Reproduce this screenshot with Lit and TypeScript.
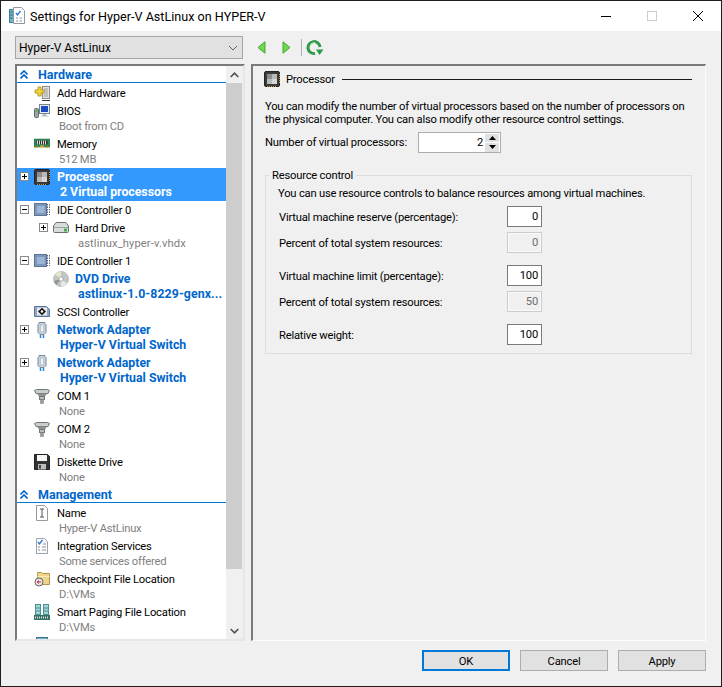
import { LitElement, html, css, svg } from 'lit';
import { customElement } from 'lit/decorators.js';

const icons: Record<string, any> = {
  add: svg`<rect x="8.5" y="1.5" width="7" height="12" fill="#e4e4e4" stroke="#8a8a8a"/><path d="M11 3v9M13 3v9" stroke="#9a9a9a"/><path d="M8 15.5h8" stroke="#333"/><path d="M1 5h3V2h3v3h3v3H7v3H4V8H1z" fill="#f2d23c" stroke="#b08e10" stroke-width=".8"/>`,
  bios: svg`<rect x="5.5" y="1.5" width="10" height="9" fill="#e8eef5" stroke="#77828e"/><rect x="7" y="3" width="7" height="6" fill="#1a4bc0"/><path d="M9 11h3v1.500h2v1H7v-1h2z" fill="#b4b8bc"/><rect x="0.500" y="5.500" width="4" height="9" rx="1" fill="#98a6a4" stroke="#5f6c6a"/><rect x="1.500" y="7" width="2" height="1.500" fill="#37b24a"/>`,
  memory: svg`<rect x="0" y="3" width="16" height="8" fill="#2f8a55" stroke="#1f6a3f" stroke-width=".5"/><rect x="2.500" y="4.500" width="11" height="4" fill="#303030"/><path d="M3.500 4.500v4M5.500 4.500v4M7.500 4.500v4M9.500 4.500v4M11.500 4.500v4" stroke="#d8d8d8"/><rect x="6" y="9.500" width="4" height="2" fill="#d4a62a"/><rect x="1" y="10.500" width="3" height="1.500" fill="#d4a62a"/><rect x="12" y="10.500" width="3" height="1.500" fill="#d4a62a"/>`,
  cpu: svg`<rect x=".5" y=".5" width="15" height="15" rx="1.500" fill="#3a3a3a" stroke="#222"/><rect x="3" y="3" width="10" height="10" fill="#b9b9b9"/><rect x="3" y="3" width="5" height="5" fill="#8d8d8d"/><rect x="8" y="8" width="5" height="5" fill="#d6d6d6"/><path d="M15.500 3v10M3 15.500h10" stroke="#c8a040" stroke-dasharray="1 1"/>`,
  ide: svg`<rect x=".5" y="1.500" width="12" height="12" fill="#7d98bb" stroke="#5a7396"/><rect x="2.500" y="3.500" width="8.500" height="8" fill="#9db6d6" stroke="#6e88aa" stroke-width=".5"/><path d="M13.500 2v11M15.500 2v11" stroke="#5e6a78" stroke-dasharray="1.500 1"/>`,
  hdd: svg`<path d="M3 2.500h10L15.500 6v5.500a1 1 0 0 1-1 1h-13a1 1 0 0 1-1-1V6z" fill="#d9dcdc" stroke="#6d7272"/><path d="M1 7.500h14" stroke="#9da3a3"/><rect x="11" y="8.500" width="3" height="3" fill="#48b04a"/>`,
  dvd: svg`<circle cx="8" cy="8" r="7.500" fill="#c2c6c4" stroke="#a0a4a2" stroke-width=".6"/><path d="M8 8L2 3.500A7.500 7.500 0 0 1 8 .5z" fill="#dfe8c8"/><path d="M8 8l6 4.500A7.500 7.500 0 0 1 8 15.500z" fill="#e8e8e8"/><path d="M8 8L1 10a7.500 7.500 0 0 0 2.500 4z" fill="#8f9490"/><circle cx="8" cy="8" r="2.200" fill="#fff" stroke="#8c908e" stroke-width=".7"/>`,
  scsi: svg`<path d="M.5 2.500h12l3 3v7H.500z" fill="#8da8cc" stroke="#5d7697"/><rect x="3" y="3.500" width="10" height="8" fill="#e8e8e8"/><path d="M8 3.800L12 7.500 8 11.200 4 7.500z" fill="#111"/><circle cx="8" cy="7.500" r="1.300" fill="#fff"/>`,
  net: svg`<path d="M5 .5h6v1l1 1v8l-2 2H6l-2-2v-8l1-1z" fill="#c7d2dc" stroke="#7b8a98"/><rect x="6.500" y="3" width="3" height="7" fill="#eef2f5" stroke="#9aa8b4" stroke-width=".5"/><path d="M6.500 13v3M9.500 13v3" stroke="#2f86cf" stroke-width="1.500"/>`,
  com: svg`<path d="M.5 2.500l2-1h11l2 1-1.500 3h-12z" fill="#c9cdcd" stroke="#6f7474"/><path d="M3 5.500h10l-2 3H5z" fill="#8c9292"/><rect x="5.500" y="8.500" width="5" height="3" fill="#b8bcbc" stroke="#777"/><rect x="6.500" y="11.500" width="3" height="4" fill="#9aa0a0" stroke="#777" stroke-width=".5"/>`,
  disk: svg`<path d="M.5.500h13l2 2v13H.5z" fill="#333" stroke="#222"/><rect x="3" y="1" width="10" height="6" fill="#f6f6f6"/><rect x="4" y="10" width="8" height="5.500" fill="#bdbdbd"/><rect x="5" y="11" width="2" height="3.500" fill="#444"/>`,
  name: svg`<path d="M2.500.5h8l3 3v12h-11z" fill="#fff" stroke="#9a9a9a"/><path d="M6 4h4M6 12h4M8 4v8" stroke="#555" fill="none"/>`,
  integ: svg`<path d="M2.500.5h8l3 3v12h-11z" fill="#fbfbfb" stroke="#9aa4ae"/><path d="M4 4l1.500 2L8.500 2" stroke="#2a78d0" stroke-width="1.300" fill="none"/><path d="M9 6h3M4 9h2M8 9h4M4 12h2M8 12h4" stroke="#8a929a"/>`,
  check: svg`<path d="M3.500 3.500v-2h4l1 1h7v11h-12z" fill="#ecd48a" stroke="#b3954a"/><path d="M3.500 5.500h12" stroke="#f8eab8"/><circle cx="5" cy="11" r="4" fill="#e8e8e8" stroke="#666"/><path d="M7 11H3M5 9.500L3.300 11 5 12.500" stroke="#c22" fill="none"/>`,
  paging: svg`<rect x="1.500" y=".5" width="5" height="10" fill="#9fd6d8" stroke="#4f8f96"/><rect x="9.500" y=".5" width="5" height="10" fill="#9fd6d8" stroke="#4f8f96"/><path d="M2 4h4M2 7h4M10 4h4M10 7h4" stroke="#4f8f96"/><rect x="0" y="11" width="16" height="5" fill="#33705f"/><path d="M1.500 12.500v2M3.500 12.500v2M5.500 12.500v2M7.500 12.500v2M9.500 12.500v2M11.500 12.500v2M13.500 12.500v2" stroke="#dde"/>`,
  start: svg`<rect x="2.500" y=".5" width="11" height="14" fill="#6fb0c4" stroke="#3b7488"/>`,
};

type Row = { icon: string; name: string; sub?: string; exp?: string; lvl2?: boolean; bold?: boolean; sel?: boolean };

const hardware: Row[] = [
  { icon: 'add', name: 'Add Hardware' },
  { icon: 'bios', name: 'BIOS', sub: 'Boot from CD' },
  { icon: 'memory', name: 'Memory', sub: '512 MB' },
  { icon: 'cpu', name: 'Processor', sub: '2 Virtual processors', exp: '+', sel: true, bold: true },
  { icon: 'ide', name: 'IDE Controller 0', exp: '-' },
  { icon: 'hdd', name: 'Hard Drive', sub: 'astlinux_hyper-v.vhdx', exp: '+', lvl2: true },
  { icon: 'ide', name: 'IDE Controller 1', exp: '-' },
  { icon: 'dvd', name: 'DVD Drive', sub: 'astlinux-1.0-8229-genx...', lvl2: true, bold: true },
  { icon: 'scsi', name: 'SCSI Controller' },
  { icon: 'net', name: 'Network Adapter', sub: 'Hyper-V Virtual Switch', exp: '+', bold: true },
  { icon: 'net', name: 'Network Adapter', sub: 'Hyper-V Virtual Switch', exp: '+', bold: true },
  { icon: 'com', name: 'COM 1', sub: 'None' },
  { icon: 'com', name: 'COM 2', sub: 'None' },
  { icon: 'disk', name: 'Diskette Drive', sub: 'None' },
];

const management: Row[] = [
  { icon: 'name', name: 'Name', sub: 'Hyper-V AstLinux' },
  { icon: 'integ', name: 'Integration Services', sub: 'Some services offered' },
  { icon: 'check', name: 'Checkpoint File Location', sub: 'D:\\VMs' },
  { icon: 'paging', name: 'Smart Paging File Location', sub: 'D:\\VMs' },
  // only the top of this row's icon shows above the list's edge
  { icon: 'start', name: '' },
];

const fields = [
  { label: 'Virtual machine reserve (percentage):', value: '0' },
  { label: 'Percent of total system resources:', value: '0', off: true },
  { label: 'Virtual machine limit (percentage):', value: '100', gap: true },
  { label: 'Percent of total system resources:', value: '50', off: true },
  { label: 'Relative weight:', value: '100', gap: true },
];

@customElement('app-root')
export class AppRoot extends LitElement {
  static styles = css`
    :host {
      display: block;
      width: 722px;
      height: 687px;
      font-family: Roboto, sans-serif;
      font-size: 11.2px;
      letter-spacing: -0.2px;
      color: #000;
    }
    .win {
      box-sizing: border-box;
      width: 722px;
      height: 687px;
      border: 1px solid #1f1f1f;
      background: #f0f0f0;
      display: flex;
      flex-direction: column;
    }
    .title {
      height: 30px;
      flex: none;
      background: #fff;
      display: flex;
      align-items: center;
      padding-left: 8px;
      font-size: 12.6px;
      letter-spacing: 0;
    }
    .title span { margin-left: 4px; flex: 1; }
    .title svg { display: block; }
    .ctl { width: 46px; display: flex; justify-content: center; }
    .toolbar {
      display: flex;
      align-items: center;
      margin: 5px 15px 0 14px;
      height: 23px;
      flex: none;
    }
    .combo {
      box-sizing: border-box;
      width: 228px;
      height: 23px;
      border: 1px solid #a6a6a6;
      background: #e1e1e1;
      display: flex;
      align-items: center;
      justify-content: space-between;
      padding: 0 4px 0 3px;
      font-size: 12px;
      letter-spacing: 0;
    }
    .nav { display: flex; align-items: center; margin-left: 14px; }
    .nav svg { display: block; }
    .nav .b { margin-left: 16px; }
    .sep { width: 1px; height: 17px; background: #b0b0b0; margin: 0 4px 0 10px; }
    .content {
      display: flex;
      gap: 6px;
      margin: 5px 0 0 14px;
      height: 577px;
      flex: none;
    }
    .tree {
      box-sizing: border-box;
      width: 230px;
      display: flex;
      border-style: solid;
      border-width: 2px;
      border-color: #7a7a7a #e6e6e6 #e6e6e6 #7a7a7a;
      background: #fff;
    }
    .list { width: 209px; flex: none; overflow: hidden; }
    .head {
      box-sizing: border-box;
      height: 17px;
      margin-bottom: 1px;
      border-bottom: 1px solid #0078d7;
      display: flex;
      align-items: center;
      color: #0066cc;
      font-weight: 700;
      font-size: 12.5px;
      letter-spacing: 0;
      line-height: 15px;
      padding: 1px 0 0 3px;
    }
    .head svg { margin-right: 10px; }
    .row { display: flex; padding-top: 2px; line-height: 15px; height: 16px; }
    .row.two { height: 31px; }
    .row.lvl2 { padding-left: 19px; }
    .row.sel { background: #3399ff; color: #fff; }
    .row.bold { font-weight: 700; color: #0066cc; font-size: 12.3px; letter-spacing: 0; }
    .row.sel.bold { color: #fff; }
    .exp { width: 17px; flex: none; padding-top: 2px; padding-left: 3px; box-sizing: border-box; }
    .box {
      box-sizing: border-box;
      width: 9px;
      height: 9px;
      border: 1px solid #8a8a8a;
      background: #fff;
      display: block;
    }
    .box svg { display: block; }
    .ic { width: 16px; height: 16px; flex: none; margin: -1px 7px 0 0; display: block; }
    .row.lvl2 .ic { margin-right: 6px; }
    .sub { color: #808080; margin-left: 2px; white-space: nowrap; }
    .row.lvl2 .sub { margin-left: 3px; letter-spacing: 0.1px; }
    .row.bold .sub { color: inherit; margin-left: 3px; }
    .row.sel .sub { color: #fff; }
    .txt { white-space: nowrap; }
    .sb { width: 17px; flex: none; background: #f0f0f0; display: flex; flex-direction: column; }
    .sb .btn { height: 17px; flex: none; display: flex; align-items: center; justify-content: center; }
    .thumb { height: 486px; flex: none; background: #cdcdcd; margin-right: 1px; }
    .sb .end { margin-top: auto; }
    .panel {
      box-sizing: border-box;
      width: 455px;
      border-style: solid;
      border-width: 2px 1px 1px 2px;
      border-color: #7a7a7a #fcfcfc #fcfcfc #7a7a7a;
      padding: 5px 13px 0 12px;
    }
    .ph { display: flex; align-items: center; height: 16px; margin-left: -1px; line-height: 15px; }
    .ph span { margin: 0 7px 0 6px; }
    .ph i { flex: 1; height: 1px; background: #1a1a1a; }
    .intro { margin: 13px 0 0; line-height: 13px; white-space: nowrap; }
    .num { display: flex; align-items: center; margin-top: 6px; height: 21px; white-space: nowrap; }
    .num label { width: 153px; }
    .spin {
      box-sizing: border-box;
      width: 83px;
      height: 21px;
      border: 1px solid #adadad;
      background: #fff;
      display: flex;
      justify-content: flex-end;
      align-items: center;
      padding-right: 1px;
    }
    .spin b { font-weight: 400; margin-right: 2px; }
    .arrows { width: 14px; display: flex; flex-direction: column; gap: 1px; }
    .arrows span { height: 8.500px; background: #e1e1e1; display: flex; align-items: center; justify-content: center; }
    .group {
      box-sizing: border-box;
      width: 427px;
      height: 179px;
      margin-top: 22px;
      border: 1px solid #dcdcdc;
      padding: 0 149px 0 12px;
    }
    .legend {
      display: table;
      margin: -8px 0 0 -9px;
      padding: 0 3px;
      background: #f0f0f0;
      line-height: 15px;
    }
    .gtext { line-height: 15px; margin-top: 3px; white-space: nowrap; }
    .f { display: flex; justify-content: space-between; align-items: center; height: 21px; margin: 5px 0 0 1px; }
    .f.gap { margin-top: 12px; }
    .f span { padding-top: 2px; }
    .inp {
      box-sizing: border-box;
      width: 35px;
      height: 21px;
      border: 1px solid #7a7a7a;
      background: #fff;
      text-align: right;
      line-height: 20px;
      padding-right: 3px;
    }
    .inp.off { border-color: #cccccc; background: #f0f0f0; color: #6d6d6d; box-shadow: inset 0 0 0 1px #fafafa; }
    .foot { display: flex; justify-content: flex-end; gap: 10px; margin: 9px 15px 0 0; }
    .bt {
      box-sizing: border-box;
      width: 88px;
      height: 21px;
      border: 1px solid #adadad;
      background: #e1e1e1;
      text-align: center;
      line-height: 21px;
    }
    .bt.def { border: 2px solid #0078d7; line-height: 19px; }
  `;

  renderRow(r: Row) {
    const cls = ['row', r.sub ? 'two' : '', r.lvl2 ? 'lvl2' : '', r.sel ? 'sel' : '', r.bold ? 'bold' : ''].join(' ');
    return html`
      <div class=${cls}>
        <span class="exp">
          ${r.exp
            ? html`<span class="box"><svg width="7" height="7" viewBox="0 0 7 7">
                <path d=${r.exp === '+' ? 'M1 3.500h5M3.500 1v5' : 'M1 3.500h5'} stroke="#000"/>
              </svg></span>`
            : ''}
        </span>
        <svg class="ic" viewBox="0 0 16 16">${icons[r.icon]}</svg>
        <div>
          <div class="txt">${r.name}</div>
          ${r.sub ? html`<div class="sub">${r.sub}</div>` : ''}
        </div>
      </div>
    `;
  }

  renderHead(name: string) {
    return html`
      <div class="head">
        <svg width="8" height="9" viewBox="0 0 8 9">
          <path d="M.5 4.500L4 1l3.500 3.500M.5 8.500L4 5l3.500 3.500" stroke="#0066cc" stroke-width="1.600" fill="none"/>
        </svg>
        <span>${name}</span>
      </div>
    `;
  }

  render() {
    return html`
      <div class="win">
        <div class="title">
          <svg width="17" height="18" viewBox="0 0 17 18">
            <rect x="0.500" y="2.500" width="4" height="13" fill="#6fb7c9" stroke="#3f8296"/>
            <path d="M1 5h3M1 8h3M1 11h3" stroke="#2f7488"/>
            <path d="M4.500.5h8l3 3v13h-11z" fill="#fff" stroke="#8f98a0"/>
            <path d="M7 6l1.500 2 3-4" stroke="#2a78d0" stroke-width="1.300" fill="none"/>
            <path d="M7 11h2M10.500 11H13M7 14h2M10.500 14H13" stroke="#8a929a"/>
          </svg>
          <span>Settings for Hyper-V AstLinux on HYPER-V</span>
          <div class="ctl"><svg width="10" height="10"><path d="M0 5.500h10" stroke="#000"/></svg></div>
          <div class="ctl"><svg width="10" height="10"><rect x=".5" y=".5" width="9" height="9" fill="none" stroke="#ccc"/></svg></div>
          <div class="ctl"><svg width="10" height="10"><path d="M0 0l10 10M10 0L0 10" stroke="#000"/></svg></div>
        </div>

        <div class="toolbar">
          <div class="combo">
            <span>Hyper-V AstLinux</span>
            <svg width="10" height="6" viewBox="0 0 10 6"><path d="M1 1l4 4 4-4" stroke="#606060" fill="none"/></svg>
          </div>
          <div class="nav">
            <svg width="9" height="13" viewBox="0 0 9 13"><path d="M8 .8v11.400L1 6.500z" fill="#6fd84e" stroke="#45a52e"/></svg>
            <svg class="b" width="9" height="13" viewBox="0 0 9 13"><path d="M1 .8v11.400L8 6.500z" fill="#6fd84e" stroke="#45a52e"/></svg>
            <span class="sep"></span>
            <svg width="18" height="16" viewBox="0 0 18 16">
              <path d="M9 13.500A6 6 0 1 1 14 7" fill="none" stroke="#2f9a4a" stroke-width="3"/>
              <path d="M10 9.500h7.500L13.500 15z" fill="#2f9a4a"/>
              <path d="M4.500 4.500A5 5 0 0 1 9 2.500" fill="none" stroke="#a5e3a0" stroke-width="1"/>
            </svg>
          </div>
        </div>

        <div class="content">
          <div class="tree">
            <div class="list">
              ${this.renderHead('Hardware')}
              ${hardware.map((r) => this.renderRow(r))}
              ${this.renderHead('Management')}
              ${management.map((r) => this.renderRow(r))}
            </div>
            <div class="sb">
              <div class="btn"><svg width="9" height="6" viewBox="0 0 9 6"><path d="M.7 5L4.500 1.200 8.300 5" stroke="#505050" stroke-width="1.600" fill="none"/></svg></div>
              <div class="thumb"></div>
              <div class="btn end"><svg width="9" height="6" viewBox="0 0 9 6"><path d="M.7 1l3.800 3.800L8.300 1" stroke="#505050" stroke-width="1.600" fill="none"/></svg></div>
            </div>
          </div>

          <div class="panel">
            <div class="ph">
              <svg width="16" height="16" viewBox="0 0 16 16">${icons.cpu}</svg>
              <span>Processor</span>
              <i></i>
            </div>
            <p class="intro">You can modify the number of virtual processors based on the number of processors on<br />the physical computer. You can also modify other resource control settings.</p>
            <div class="num">
              <label>Number of virtual processors:</label>
              <div class="spin">
                <b>2</b>
                <div class="arrows">
                  <span><svg width="7" height="4"><path d="M3.500 0L7 4H0z" fill="#000"/></svg></span>
                  <span><svg width="7" height="4"><path d="M0 0h7L3.500 4z" fill="#000"/></svg></span>
                </div>
              </div>
            </div>
            <div class="group">
              <div class="legend">Resource control</div>
              <div class="gtext">You can use resource controls to balance resources among virtual machines.</div>
              ${fields.map(
                (f) => html`
                  <div class="f ${f.gap ? 'gap' : ''}">
                    <span>${f.label}</span>
                    <div class="inp ${f.off ? 'off' : ''}">${f.value}</div>
                  </div>
                `
              )}
            </div>
          </div>
        </div>

        <div class="foot">
          <div class="bt def">OK</div>
          <div class="bt">Cancel</div>
          <div class="bt">Apply</div>
        </div>
      </div>
    `;
  }
}
